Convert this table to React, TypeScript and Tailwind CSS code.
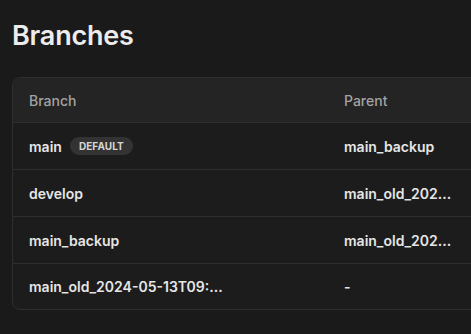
import React from 'react';

const rows = [
  { name: 'main', parent: 'main_backup', isDefault: true },
  { name: 'develop', parent: 'main_old_202...', isDefault: false },
  { name: 'main_backup', parent: 'main_old_202...', isDefault: false },
  { name: 'main_old_2024-05-13T09:...', parent: '-', isDefault: false },
];

export default function App() {
  return (
    <div
      className="h-[334px] w-[471px] overflow-hidden bg-[#1a1a1a] text-[#ededed]"
      style={{ fontFamily: 'Inter, "Noto Sans", sans-serif' }}
    >
      <div className="pl-3 pt-[18px]">
        <h1 className="text-[27px] font-semibold leading-[36px] tracking-[-0.2px] text-[#ececec]">Branches</h1>

        <div className="mt-[23px] w-[600px] overflow-hidden rounded-lg border border-[#2e2e2e] bg-[#1c1c1c]">
          <div className="flex h-[45px] items-center border-b border-[#2e2e2e] bg-[#242424] text-[14px] font-medium text-[#a3a3a3]">
            <div className="w-[315px] pl-4">Branch</div>
            <div className="pl-4">Parent</div>
          </div>
          {rows.map((r, i) => (
            <div
              key={r.name}
              className={`flex items-center text-[14px] font-semibold text-[#e6e6e6] ${
                i < rows.length - 1 ? 'h-[47px] border-b border-[#2e2e2e]' : 'h-[45px]'
              }`}
            >
              <div className="flex w-[315px] items-center gap-2 pl-4">
                <span className="whitespace-nowrap">{r.name}</span>
                {r.isDefault && (
                  <span className="rounded-full bg-[#333333] px-[9px] py-[3px] text-[10px] font-bold leading-[12px] tracking-[0.1px] text-[#d6d6d6]">
                    DEFAULT
                  </span>
                )}
              </div>
              <div className="whitespace-nowrap pl-4">{r.parent}</div>
            </div>
          ))}
        </div>
      </div>
    </div>
  );
}
